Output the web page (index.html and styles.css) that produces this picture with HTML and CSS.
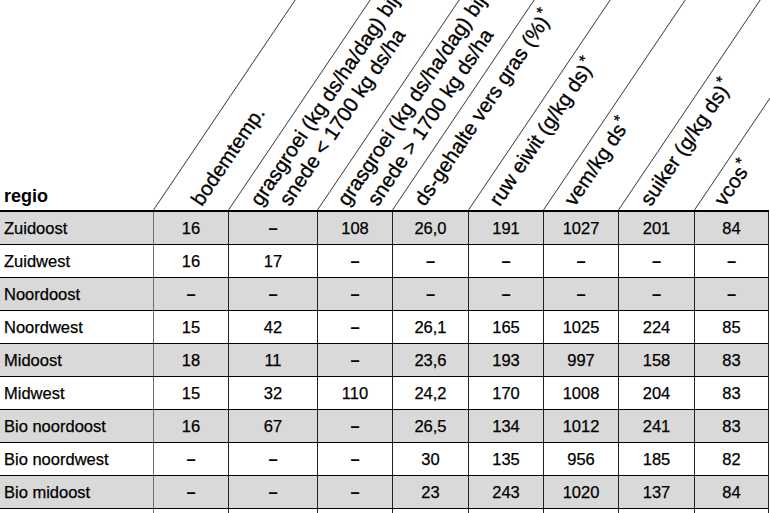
FILE: index.html
```html
<!DOCTYPE html>
<html lang="nl">
<head>
<meta charset="utf-8">
<title>Graskwaliteit per regio</title>
<link rel="stylesheet" href="styles.css">
</head>
<body>
<table class="sheet">
  <colgroup>
    <col class="w-regio"><col class="w75"><col class="w89"><col class="w75"><col class="w76"><col class="w75"><col class="w75"><col class="w76"><col class="w74">
  </colgroup>
  <thead>
    <tr>
      <th class="h-regio">regio</th>
      <th class="h-rot"><div class="hd"><span class="slant"></span><span class="lbl x52">bodemtemp.</span></div></th>
      <th class="h-rot"><div class="hd"><span class="slant"></span><span class="lbl x36">grasgroei (kg ds/ha/dag) bij</span><span class="lbl x65">snede &lt; 1700 kg ds/ha</span></div></th>
      <th class="h-rot"><div class="hd"><span class="slant"></span><span class="lbl x34">grasgroei (kg ds/ha/dag) bij</span><span class="lbl x64">snede &gt; 1700 kg ds/ha</span></div></th>
      <th class="h-rot"><div class="hd"><span class="slant"></span><span class="lbl x36">ds-gehalte vers gras (%)<sup>*</sup></span></div></th>
      <th class="h-rot"><div class="hd"><span class="slant"></span><span class="lbl x35">ruw eiwit (g/kg ds)<sup>*</sup></span></div></th>
      <th class="h-rot"><div class="hd"><span class="slant"></span><span class="lbl x35">vem/kg ds<sup>*</sup></span></div></th>
      <th class="h-rot"><div class="hd"><span class="slant"></span><span class="lbl x36">suiker (g/kg ds)<sup>*</sup></span></div></th>
      <th class="h-rot"><div class="hd"><span class="slant"></span><span class="lbl x34">vcos<sup>*</sup></span></div></th>
    </tr>
  </thead>
  <tbody>
    <tr class="alt"><td class="rg">Zuidoost</td><td>16</td><td class="na">–</td><td>108</td><td>26,0</td><td>191</td><td>1027</td><td>201</td><td>84</td></tr>
    <tr><td class="rg">Zuidwest</td><td>16</td><td>17</td><td class="na">–</td><td class="na">–</td><td class="na">–</td><td class="na">–</td><td class="na">–</td><td class="na">–</td></tr>
    <tr class="alt"><td class="rg">Noordoost</td><td class="na">–</td><td class="na">–</td><td class="na">–</td><td class="na">–</td><td class="na">–</td><td class="na">–</td><td class="na">–</td><td class="na">–</td></tr>
    <tr><td class="rg">Noordwest</td><td>15</td><td>42</td><td class="na">–</td><td>26,1</td><td>165</td><td>1025</td><td>224</td><td>85</td></tr>
    <tr class="alt"><td class="rg">Midoost</td><td>18</td><td>11</td><td class="na">–</td><td>23,6</td><td>193</td><td>997</td><td>158</td><td>83</td></tr>
    <tr><td class="rg">Midwest</td><td>15</td><td>32</td><td>110</td><td>24,2</td><td>170</td><td>1008</td><td>204</td><td>83</td></tr>
    <tr class="alt"><td class="rg">Bio noordoost</td><td>16</td><td>67</td><td class="na">–</td><td>26,5</td><td>134</td><td>1012</td><td>241</td><td>83</td></tr>
    <tr><td class="rg">Bio noordwest</td><td class="na">–</td><td class="na">–</td><td class="na">–</td><td>30</td><td>135</td><td>956</td><td>185</td><td>82</td></tr>
    <tr class="alt"><td class="rg">Bio midoost</td><td class="na">–</td><td class="na">–</td><td class="na">–</td><td>23</td><td>243</td><td>1020</td><td>137</td><td>84</td></tr>
    <tr><td class="rg">&nbsp;</td><td></td><td></td><td></td><td></td><td></td><td></td><td></td><td></td></tr>
  </tbody>
</table>
</body>
</html>
```

FILE: styles.css
```css
* { box-sizing: border-box; }

html, body {
  margin: 0;
  padding: 0;
  background: #fff;
  overflow: hidden;
}

body {
  font-family: "Liberation Sans", Arial, sans-serif;
  color: #000;
}

.sheet {
  border-collapse: separate;
  border-spacing: 0;
  table-layout: fixed;
  width: 769px;
}

.w-regio { width: 154px; }
.w74 { width: 74px; }
.w75 { width: 75px; }
.w76 { width: 76px; }
.w89 { width: 89px; }

th {
  padding: 0;
  height: 212px;
  border-bottom: 2px solid #000;
  vertical-align: bottom;
  font-weight: normal;
  text-align: left;
}

.h-regio {
  font-weight: bold;
  font-size: 18px;
  padding: 0 0 3px 4px;
}

.hd {
  display: grid;
  grid-template-columns: minmax(0, 1fr);
  height: 210px;
}

.hd > * {
  grid-area: 1 / 1;
}

.slant {
  align-self: stretch;
  justify-self: start;
  width: 1px;
  margin-left: -1px;
  background: #333;
  transform: skewX(-34deg);
  transform-origin: 0 100%;
}

.lbl {
  align-self: end;
  justify-self: start;
  white-space: nowrap;
  font-size: 20.5px;
  line-height: 24px;
  -webkit-text-stroke: 0.3px #000;
  transform: rotate(-56deg);
  transform-origin: 0 100%;
}

.lbl sup {
  font-size: 16px;
  line-height: 0;
  vertical-align: 7px;
  margin-left: 1px;
}

.x34 { margin-left: 34px; }
.x35 { margin-left: 35px; }
.x36 { margin-left: 36px; }
.x52 { margin-left: 52px; }
.x64 { margin-left: 64px; }
.x65 { margin-left: 65px; }

td {
  height: 33px;
  padding: 0;
  border-bottom: 1px solid #000;
  border-right: 1px solid #222;
  text-align: center;
  font-size: 16.5px;
  white-space: nowrap;
  -webkit-text-stroke: 0.25px #000;
}

td.rg {
  text-align: left;
  padding-left: 4px;
  border-right-color: #6e6e6e;
}

td.na {
  font-weight: bold;
  -webkit-text-stroke: 0;
}

tr.alt td {
  background: #d9d9d9;
}
```
